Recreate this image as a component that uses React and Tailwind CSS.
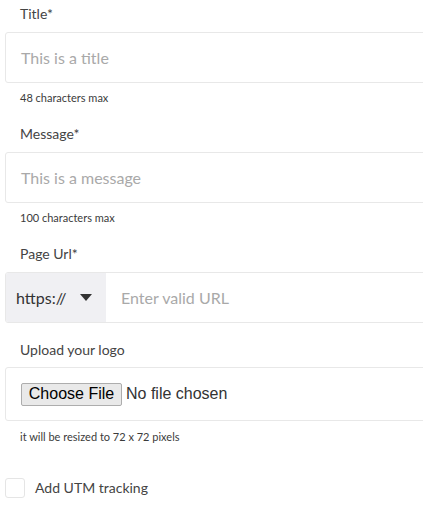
const Label = ({ children, className = "" }) => (
  <p className={`h-[20px] pl-[15px] text-[14px] leading-[20px] text-[#444] ${className}`}>
    {children}
  </p>
);

const Helper = ({ children, className = "" }) => (
  <p className={`h-[16px] pl-[15px] text-[11px] leading-[16px] text-[#3b3b3b] ${className}`}>
    {children}
  </p>
);

const TextField = ({ placeholder }) => (
  <div className="mt-[8px] flex h-[51px] w-[460px] items-center rounded-[3px] border border-[#e8e8e8] bg-white pl-[15px]">
    <span className="text-[16px] text-[#a9a9a9]">{placeholder}</span>
  </div>
);

const App = () => {
  return (
    <div
      className="h-[507px] w-full overflow-hidden bg-white pl-[5px] pt-[4px]"
      style={{ fontFamily: "Lato, 'Open Sans', sans-serif" }}
    >
      <Label>Title*</Label>
      <TextField placeholder="This is a title" />
      <Helper className="mt-[7px]">48 characters max</Helper>

      <Label className="mt-[18px]">Message*</Label>
      <TextField placeholder="This is a message" />
      <Helper className="mt-[7px]">100 characters max</Helper>

      <Label className="mt-[18px]">Page Url*</Label>
      <div className="mt-[8px] flex h-[51px] w-[460px] overflow-hidden rounded-[3px] border border-[#e8e8e8] bg-white">
        <div className="flex w-[100px] items-center bg-[#f0f0f3] pl-[10px]">
          <span className="text-[16px] text-[#333]">https://</span>
          <svg className="ml-[13px]" width="12" height="7" viewBox="0 0 12 7">
            <path d="M0 0 L12 0 L6 7 Z" fill="#333" />
          </svg>
        </div>
        <div className="flex items-center pl-[15px]">
          <span className="text-[16px] text-[#a9a9a9]">Enter valid URL</span>
        </div>
      </div>

      <Label className="mt-[17px]">Upload your logo</Label>
      <div className="mt-[7px] flex h-[54px] w-[460px] items-center rounded-[3px] border border-[#e8e8e8] bg-white pl-[15px]">
        <div
          className="flex items-center"
          style={{ fontFamily: "'Liberation Sans', Arial, sans-serif" }}
        >
          <button
            type="button"
            className="flex h-[23px] w-[101px] items-center justify-center rounded-[2px] border border-[#adadad] bg-[#e9e9e9] text-[16px] text-black"
          >
            Choose File
          </button>
          <span className="ml-[4px] text-[16px] text-[#333]">No file chosen</span>
        </div>
      </div>
      <Helper className="mt-[8px] text-[10px]">it will be resized to 72 x 72 pixels</Helper>

      <label className="mt-[32px] flex items-center">
        <span className="h-[20px] w-[20px] rounded-[3px] border border-[#e5e5e5] bg-white" />
        <span className="ml-[10px] text-[14px] text-[#444]">Add UTM tracking</span>
      </label>
    </div>
  );
};

export default App;
